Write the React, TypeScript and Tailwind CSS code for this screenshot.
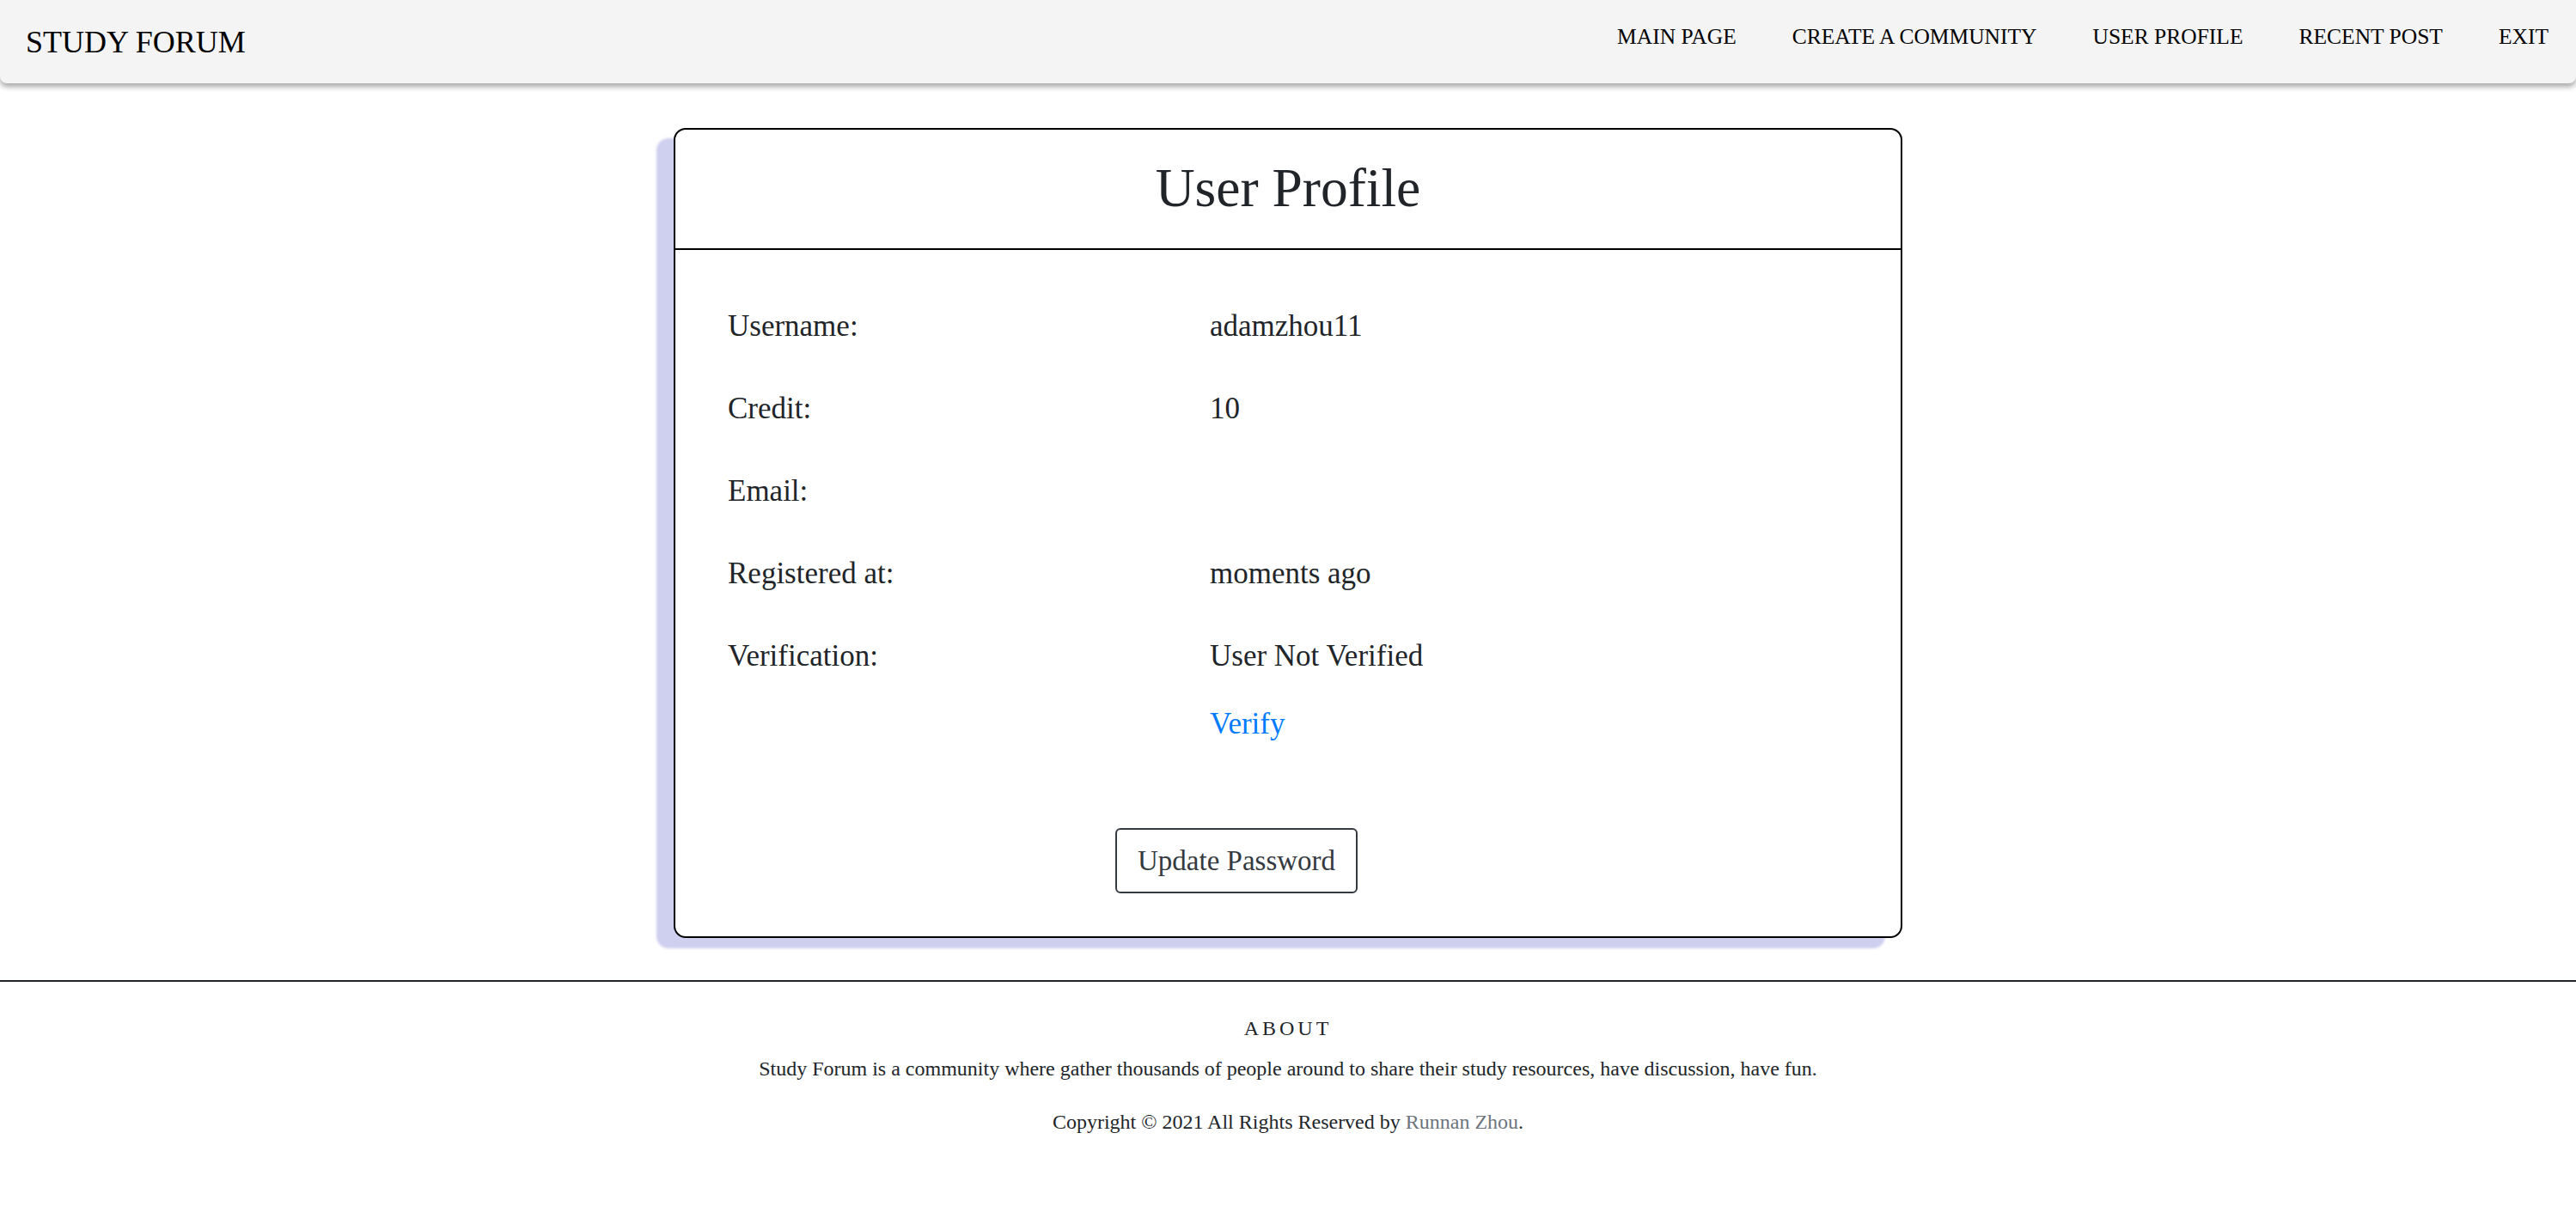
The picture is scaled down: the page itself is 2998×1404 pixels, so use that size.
import React from "react";

type ProfileRow = {
  label: string;
  value: string;
};

const navLinks: string[] = [
  "MAIN PAGE",
  "CREATE A COMMUNITY",
  "USER PROFILE",
  "RECENT POST",
  "EXIT",
];

const rows: ProfileRow[] = [
  { label: "Username:", value: "adamzhou11" },
  { label: "Credit:", value: "10" },
  { label: "Email:", value: "" },
  { label: "Registered at:", value: "moments ago" },
];

const App: React.FC = () => {
  return (
    <div className="min-h-screen bg-white font-['Liberation_Serif',serif] text-[#212529]">
      {/* top bar */}
      <nav className="flex h-[97px] items-center justify-between rounded-b-lg bg-[#f4f4f4] pl-[30px] pr-[32px] shadow-[0_4px_6px_rgba(0,0,0,0.35)]">
        <span className="text-[36px] leading-none text-black">STUDY FORUM</span>
        <ul className="flex gap-[65px] self-start pt-[30px] text-[25.5px] leading-none text-black">
          {navLinks.map((link) => (
            <li key={link}>
              <a href="#">{link}</a>
            </li>
          ))}
        </ul>
      </nav>

      <main className="flex justify-center pt-[52px]">
        <section className="w-[1430px] rounded-[14px] border-2 border-black bg-white shadow-[-20px_12px_3px_#cfcfef]">
          <header className="flex h-[140px] items-center justify-center border-b-2 border-black pb-[3px] text-[63.5px] leading-none">
            User Profile
          </header>

          <div className="px-[61px] pb-[50px] pt-[65px]">
            <div className="flex flex-col gap-[48px] text-[35px] leading-[48px]">
              {rows.map((row) => (
                <div key={row.label} className="flex">
                  <span className="w-[561px] shrink-0">{row.label}</span>
                  <span>{row.value}</span>
                </div>
              ))}
              <div className="flex">
                <span className="w-[561px] shrink-0">Verification:</span>
                <div className="flex flex-col">
                  <span>User Not Verified</span>
                  <a href="#" className="mt-[31px] text-[#007bff]">
                    Verify
                  </a>
                </div>
              </div>
            </div>

            <button
              type="button"
              className="ml-[451px] mt-[97px] rounded-md border-2 border-[#343a40] px-[24px] py-[12px] text-[33px] leading-[48px] text-[#343a40]"
            >
              Update Password
            </button>
          </div>
        </section>
      </main>

      <footer className="mt-[49px] border-t-2 border-[#212529] pb-[60px] pt-[36px] text-center">
        <h4 className="text-[24px] leading-[36px] tracking-[4px]">ABOUT</h4>
        <p className="mt-[12px] text-[24px] leading-[34px]">
          Study Forum is a community where gather thousands of people around to share their
          study resources, have discussion, have fun.
        </p>
        <p className="mt-[28px] text-[24px] leading-[34px]">
          Copyright © 2021 All Rights Reserved by{" "}
          <a href="#" className="text-[#6c757d]">
            Runnan Zhou
          </a>
          .
        </p>
      </footer>
    </div>
  );
};

export default App;
